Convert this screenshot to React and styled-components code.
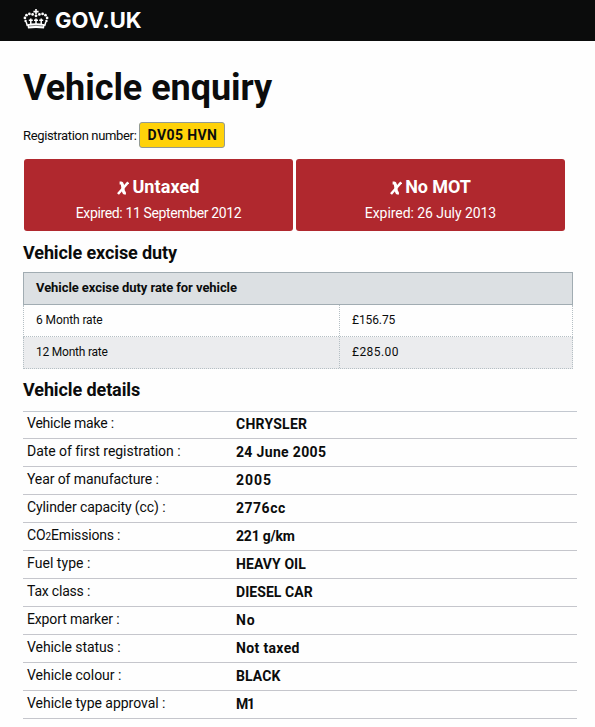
import React from "react";
import styled, { createGlobalStyle } from "styled-components";

const GlobalStyle = createGlobalStyle`
  * { box-sizing: border-box; }
  body {
    margin: 0;
    background: #fefefe;
    color: #0b0c0c;
    font-family: Roboto, "Liberation Sans", sans-serif;
    overflow: hidden;
  }
  h1, h2, p, dl, dd, dt { margin: 0; }
`;

const Header = styled.header`
  height: 41px;
  padding-left: 23px;
  display: flex;
  align-items: center;
  gap: 5px;
  background: #0b0c0c;
  color: #fff;
`;

const Crown = styled.svg`
  width: 27px;
  height: 21px;
  margin-top: -4px;
  flex: none;
`;

const Brand = styled.span`
  margin-top: -2px;
  font: 700 22px/40px Inter, "Liberation Sans", sans-serif;
  letter-spacing: 0.1px;
`;

const Page = styled.main`
  width: 554px;
  margin-left: 23px;
`;

const Title = styled.h1`
  padding-top: 26px;
  font-size: 36px;
  line-height: 42px;
  letter-spacing: -0.05px;
`;

const Registration = styled.p`
  display: flex;
  align-items: center;
  gap: 3px;
  height: 26px;
  margin-top: 13px;
  font-size: 13px;
  letter-spacing: -0.34px;
`;

const Plate = styled.strong`
  width: 86px;
  height: 26px;
  border: 1px solid #929a94;
  border-radius: 3px;
  background: #ffd20a;
  font-size: 14px;
  line-height: 24px;
  letter-spacing: 0.4px;
  text-align: center;
`;

const Statuses = styled.section`
  display: flex;
  gap: 3px;
  margin: 11px 0 0 1px;
`;

const StatusCard = styled.div`
  width: 269px;
  height: 72px;
  padding-top: 16px;
  border-radius: 3px;
  background: #b0282e;
  color: #fff;
  text-align: center;
`;

const StatusTitle = styled.h2`
  display: flex;
  justify-content: center;
  align-items: center;
  gap: 3px;
  font-size: 18px;
  line-height: 24px;
  letter-spacing: ${(p) => p.$spacing}px;
`;

const Cross = styled.svg`
  width: 12px;
  height: 14px;
  margin-top: 2px;
`;

const Expiry = styled.p`
  margin-top: 3px;
  font-size: 14px;
  line-height: 22px;
  letter-spacing: ${(p) => p.$spacing}px;
`;

const SectionTitle = styled.h2`
  height: 24px;
  margin-top: ${(p) => p.$top}px;
  font-size: 18px;
  line-height: 24px;
  letter-spacing: -0.1px;
`;

const RateTable = styled.div`
  width: 550px;
  margin-top: 7px;
`;

const RateHead = styled.div`
  height: 33px;
  padding-left: 12px;
  border: 1px solid #a1acb2;
  background: #dce0e3;
  font-size: 13px;
  font-weight: 700;
  line-height: 29px;
  letter-spacing: -0.07px;
`;

const RateRow = styled.div`
  display: grid;
  grid-template-columns: 315px 1fr;
  height: 32px;
  border: 1px dotted #b5bfc4;
  border-top: 0;
  background: ${(p) => (p.$shaded ? "#ebecee" : "transparent")};
  font-size: 12px;
  line-height: 31px;
`;

const RateCell = styled.div`
  padding-left: 12px;
  letter-spacing: ${(p) => p.$spacing}px;

  & + & {
    border-left: 1px dotted #b5bfc4;
  }
`;

const Details = styled.dl`
  margin-top: 9px;
  border-top: 1px solid #c3c8d0;
`;

const DetailRow = styled.div`
  display: grid;
  grid-template-columns: 209px 1fr;
  height: 28px;
  padding-left: 4px;
  border-bottom: 1px solid #c5c6cc;
  font-size: 14px;

  &:first-child {
    height: 27px;
  }
`;

const Label = styled.dt`
  line-height: 25px;
  letter-spacing: ${(p) => p.$spacing}px;

  ${DetailRow}:first-child & {
    line-height: 23px;
  }
`;

const Value = styled.dd`
  font-weight: 700;
  line-height: 27px;
  letter-spacing: ${(p) => p.$spacing}px;

  ${DetailRow}:first-child & {
    line-height: 25px;
  }
`;

const Subscript = styled.span`
  font-size: 10px;
  letter-spacing: 0;
`;

const CrossIcon = () => (
  <Cross viewBox="0 0 12 14" fill="none" stroke="#fff">
    <path d="M2.6 2 H4 Q5.1 2 5.3 3.6 L6.5 10.4 Q6.8 12.2 8.9 12" strokeWidth="3" />
    <path d="M11.2 1.2 L1 13" strokeWidth="2.5" />
  </Cross>
);

const CrownIcon = () => (
  <Crown viewBox="0 0 27 21" fill="#fff">
    <path d="M12.2 1h1.6v1.7h1.8v1.7h-1.8v1.8h-1.6V4.4h-1.8V2.7h1.8z" />
    <circle cx="13" cy="7.8" r="1.4" />
    <circle cx="9.6" cy="6.4" r="1.35" />
    <circle cx="16.4" cy="6.4" r="1.35" />
    <circle cx="6.4" cy="5.9" r="1.35" />
    <circle cx="19.6" cy="5.9" r="1.35" />
    <circle cx="3.5" cy="7.2" r="1.35" />
    <circle cx="22.5" cy="7.2" r="1.35" />
    <circle cx="1.9" cy="9.9" r="1.35" />
    <circle cx="24.1" cy="9.9" r="1.35" />
    <circle cx="2.6" cy="13" r="1.2" />
    <circle cx="23.4" cy="13" r="1.2" />
    <path
      d="M3.2 14l1.2 4M22.8 14l-1.2 4M13 10.5v6.5M11 12.2h4M7.8 10.5v6M5.8 12.3h4M18.2 10.5v6M16.2 12.3h4"
      stroke="#fff"
      strokeWidth="1.5"
    />
    <path d="M4.2 16.2q8.8-2 17.6 0l-.8 4.2q-8-1-16 0z" />
    <path d="M6 18q7-1.3 14 0" fill="none" stroke="#0b0c0c" strokeWidth=".5" />
  </Crown>
);

const rates = [
  { label: "6 Month rate", labelSpacing: -0.1, price: "£156.75", priceSpacing: -0.1 },
  { label: "12 Month rate", labelSpacing: -0.22, price: "£285.00", priceSpacing: 0.45 },
];

const details = [
  ["Vehicle make :", -0.22, "CHRYSLER", 0.25],
  ["Date of first registration :", -0.04, "24 June 2005", 0.34],
  ["Year of manufacture :", -0.1, "2005", 0.95],
  ["Cylinder capacity (cc) :", -0.1, "2776cc", 0.5],
  ["CO2", -0.18, "221 g/km", -0.2],
  ["Fuel type :", 0.05, "HEAVY OIL", 0.08],
  ["Tax class :", -0.2, "DIESEL CAR", 0.06],
  ["Export marker :", -0.14, "No", 0.9],
  ["Vehicle status :", -0.07, "Not taxed", 0.35],
  ["Vehicle colour :", -0.03, "BLACK", 0.1],
  ["Vehicle type approval :", -0.03, "M1", -1.2],
];

export default function App() {
  return (
    <>
      <GlobalStyle />
      <Header>
        <CrownIcon />
        <Brand>GOV.UK</Brand>
      </Header>
      <Page>
        <Title>Vehicle enquiry</Title>
        <Registration>
          Registration number: <Plate>DV05 HVN</Plate>
        </Registration>
        <Statuses>
          <StatusCard>
            <StatusTitle $spacing={0.1}><CrossIcon />Untaxed</StatusTitle>
            <Expiry $spacing={-0.37}>Expired: 11 September 2012</Expiry>
          </StatusCard>
          <StatusCard>
            <StatusTitle $spacing={-0.1}><CrossIcon />No MOT</StatusTitle>
            <Expiry $spacing={-0.06}>Expired: 26 July 2013</Expiry>
          </StatusCard>
        </Statuses>
        <SectionTitle $top={10}>Vehicle excise duty</SectionTitle>
        <RateTable>
          <RateHead>Vehicle excise duty rate for vehicle</RateHead>
          {rates.map((rate, i) => (
            <RateRow key={rate.label} $shaded={i % 2 === 1}>
              <RateCell $spacing={rate.labelSpacing}>{rate.label}</RateCell>
              <RateCell $spacing={rate.priceSpacing}>{rate.price}</RateCell>
            </RateRow>
          ))}
        </RateTable>
        <SectionTitle $top={9}>Vehicle details</SectionTitle>
        <Details>
          {details.map(([label, labelSpacing, value, valueSpacing]) => (
            <DetailRow key={label}>
              <Label $spacing={labelSpacing}>
                {label === "CO2" ? <>CO<Subscript>2</Subscript>Emissions :</> : label}
              </Label>
              <Value $spacing={valueSpacing}>{value}</Value>
            </DetailRow>
          ))}
        </Details>
      </Page>
    </>
  );
}
